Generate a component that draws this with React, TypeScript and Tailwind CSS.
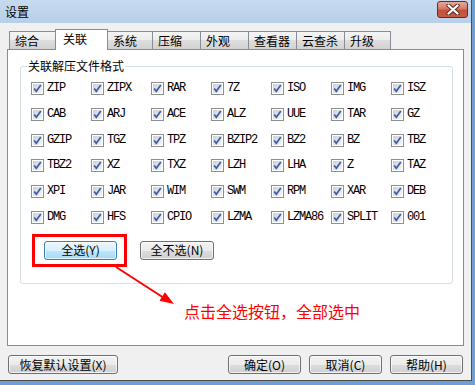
import React from 'react';

const CJK = "font-['Noto_Sans_CJK_SC','Noto_Sans',sans-serif]";

const formats = [
  ['ZIP', 'ZIPX', 'RAR', '7Z', 'ISO', 'IMG', 'ISZ'],
  ['CAB', 'ARJ', 'ACE', 'ALZ', 'UUE', 'TAR', 'GZ'],
  ['GZIP', 'TGZ', 'TPZ', 'BZIP2', 'BZ2', 'BZ', 'TBZ'],
  ['TBZ2', 'XZ', 'TXZ', 'LZH', 'LHA', 'Z', 'TAZ'],
  ['XPI', 'JAR', 'WIM', 'SWM', 'RPM', 'XAR', 'DEB'],
  ['DMG', 'HFS', 'CPIO', 'LZMA', 'LZMA86', 'SPLIT', '001'],
].flat();

const tabs = [
  { label: '综合', w: 47 },
  { label: '关联', w: 53, active: true },
  { label: '系统', w: 46 },
  { label: '压缩', w: 49 },
  { label: '外观', w: 49 },
  { label: '查看器', w: 49 },
  { label: '云查杀', w: 49 },
  { label: '升级', w: 47 },
];

function CheckBox() {
  return (
    <svg width="13" height="13" viewBox="0 0 13 13" className="shrink-0">
      <defs>
        <linearGradient id="cbg" x1="0" y1="0" x2="1" y2="1">
          <stop offset="0" stopColor="#cbcfd5" />
          <stop offset="1" stopColor="#f6f6f6" />
        </linearGradient>
      </defs>
      <rect x="0.5" y="0.5" width="12" height="12" fill="#fff" stroke="#8f8f8f" />
      <rect x="2" y="2" width="9" height="9" fill="url(#cbg)" />
      <path d="M3.2 6.4 L5.3 9.2 L9.8 2.9" fill="none" stroke="#3c5ea8" strokeWidth="1.7" />
    </svg>
  );
}

function WinButton({ children, width, blue }: { children: React.ReactNode; width: string; blue?: boolean }) {
  return (
    <div
      className={`${width} h-[19px] rounded-[3px] border flex items-center justify-center text-[12px] leading-[12px] text-black shadow-[inset_0_0_0_1px_rgba(255,255,255,0.7)] ${CJK} ${
        blue
          ? 'border-[#3c7fb1] bg-[linear-gradient(#eaf6fd_0%,#d9f0fc_50%,#bee6fd_50%,#a7d9f5_100%)]'
          : 'border-[#707070] bg-[linear-gradient(#f2f2f2_0%,#ebebeb_50%,#dddddd_50%,#cfcfcf_100%)]'
      }`}
    >
      {children}
    </div>
  );
}

export default function App() {
  return (
    <div className="relative w-[475px] h-[385px] overflow-hidden bg-[#6f9fd1]">
      <div className="w-[472px] h-[381px] bg-[#f0f0f0] border-r border-b border-[#4d4d4d] flex flex-col">
        {/* title bar */}
        <div className="h-[23px] shrink-0 bg-[linear-gradient(#c6dbf0,#b8cfe8)] flex items-center justify-between pl-[5px] pr-[3px]">
          <span className={`text-[12px] leading-[12px] text-black ${CJK}`}>设置</span>
          <div className="w-[31px] h-[17px] mb-[4px] rounded-[3px] border border-[#6b2b20] bg-[linear-gradient(#e9a899_0%,#d37a66_45%,#c2503a_55%,#c75a43_100%)] flex items-center justify-center">
            <svg width="14" height="11" viewBox="0 0 14 11">
              <path d="M2.5 1.5 L11.5 9.5 M11.5 1.5 L2.5 9.5" stroke="#5b2a22" strokeWidth="4.2" strokeLinecap="round" />
              <path d="M2.5 1.5 L11.5 9.5 M11.5 1.5 L2.5 9.5" stroke="#ffffff" strokeWidth="2.3" strokeLinecap="round" />
            </svg>
          </div>
        </div>

        {/* tabs */}
        <div className="mt-[6px] h-[20px] flex items-end pl-[9px] shrink-0">
          {tabs.map((t, i) =>
            t.active ? (
              <div
                key={t.label}
                style={{ width: t.w }}
                className={`relative z-10 h-[21px] -mb-px -ml-px bg-white border border-b-0 border-[#898c95] pl-[7px] pt-[3px] text-[12px] leading-[12px] text-black ${CJK}`}
              >
                {t.label}
              </div>
            ) : (
              <div
                key={t.label}
                style={{ width: t.w }}
                className={`h-[18px] ${i > 0 ? '-ml-px' : ''} border border-b-0 border-[#898c95] bg-[linear-gradient(#f4f4f4_0%,#ececec_50%,#dedede_50%,#d2d2d2_100%)] pl-[5px] pt-[3px] text-[12px] leading-[12px] text-black ${CJK}`}
              >
                {t.label}
              </div>
            )
          )}
        </div>

        {/* tab panel */}
        <div className="ml-[7px] w-[457px] h-[297px] shrink-0 bg-white border border-[#898c95] pt-[16px] pl-[12px]">
          <div className="relative w-[433px] h-[218px] border border-[#d5dfe5] rounded-[3px] pt-[15px] pl-[10px]">
            <span className={`absolute left-[6px] top-[-7px] px-[1px] bg-white text-[12px] leading-[12px] text-black ${CJK}`}>
              关联解压文件格式
            </span>
            <div className="grid grid-cols-[repeat(7,60px)] auto-rows-[25.8px]">
              {formats.map((f) => (
                <div key={f} className="flex items-start gap-[3px]">
                  <CheckBox />
                  <span className="font-['Liberation_Mono',monospace] text-[12px] leading-[13px] tracking-[-1.2px] text-black">
                    {f}
                  </span>
                </div>
              ))}
            </div>
            <div className="flex mt-[4px] ml-[13px] gap-[23px]">
              <WinButton width="w-[73px]" blue>全选(Y)</WinButton>
              <WinButton width="w-[74px]">全不选(N)</WinButton>
            </div>
          </div>
        </div>

        {/* bottom buttons */}
        <div className="mt-[9px] flex pl-[8px] pr-[8px]">
          <WinButton width="w-[110px]">恢复默认设置(X)</WinButton>
          <div className="flex-1" />
          <div className="flex gap-[8px]">
            <WinButton width="w-[73px]">确定(O)</WinButton>
            <WinButton width="w-[73px]">取消(C)</WinButton>
            <WinButton width="w-[73px]">帮助(H)</WinButton>
          </div>
        </div>
      </div>

      {/* annotation overlay */}
      <div className="absolute left-[32px] top-[234px] w-[95px] h-[33px] border-[3px] border-[#ff0000]" />
      <svg className="absolute left-0 top-0" width="475" height="385" viewBox="0 0 475 385">
        <line x1="116" y1="267" x2="164" y2="298" stroke="#ff0000" strokeWidth="2" />
        <polygon points="174,304 159.5,300.7 164.9,292.3" fill="#ff0000" />
      </svg>
      <span className={`absolute left-[184px] top-[303px] text-[16px] leading-[17px] text-[#ff0000] whitespace-nowrap ${CJK}`}>
        点击全选按钮，全部选中
      </span>
    </div>
  );
}
